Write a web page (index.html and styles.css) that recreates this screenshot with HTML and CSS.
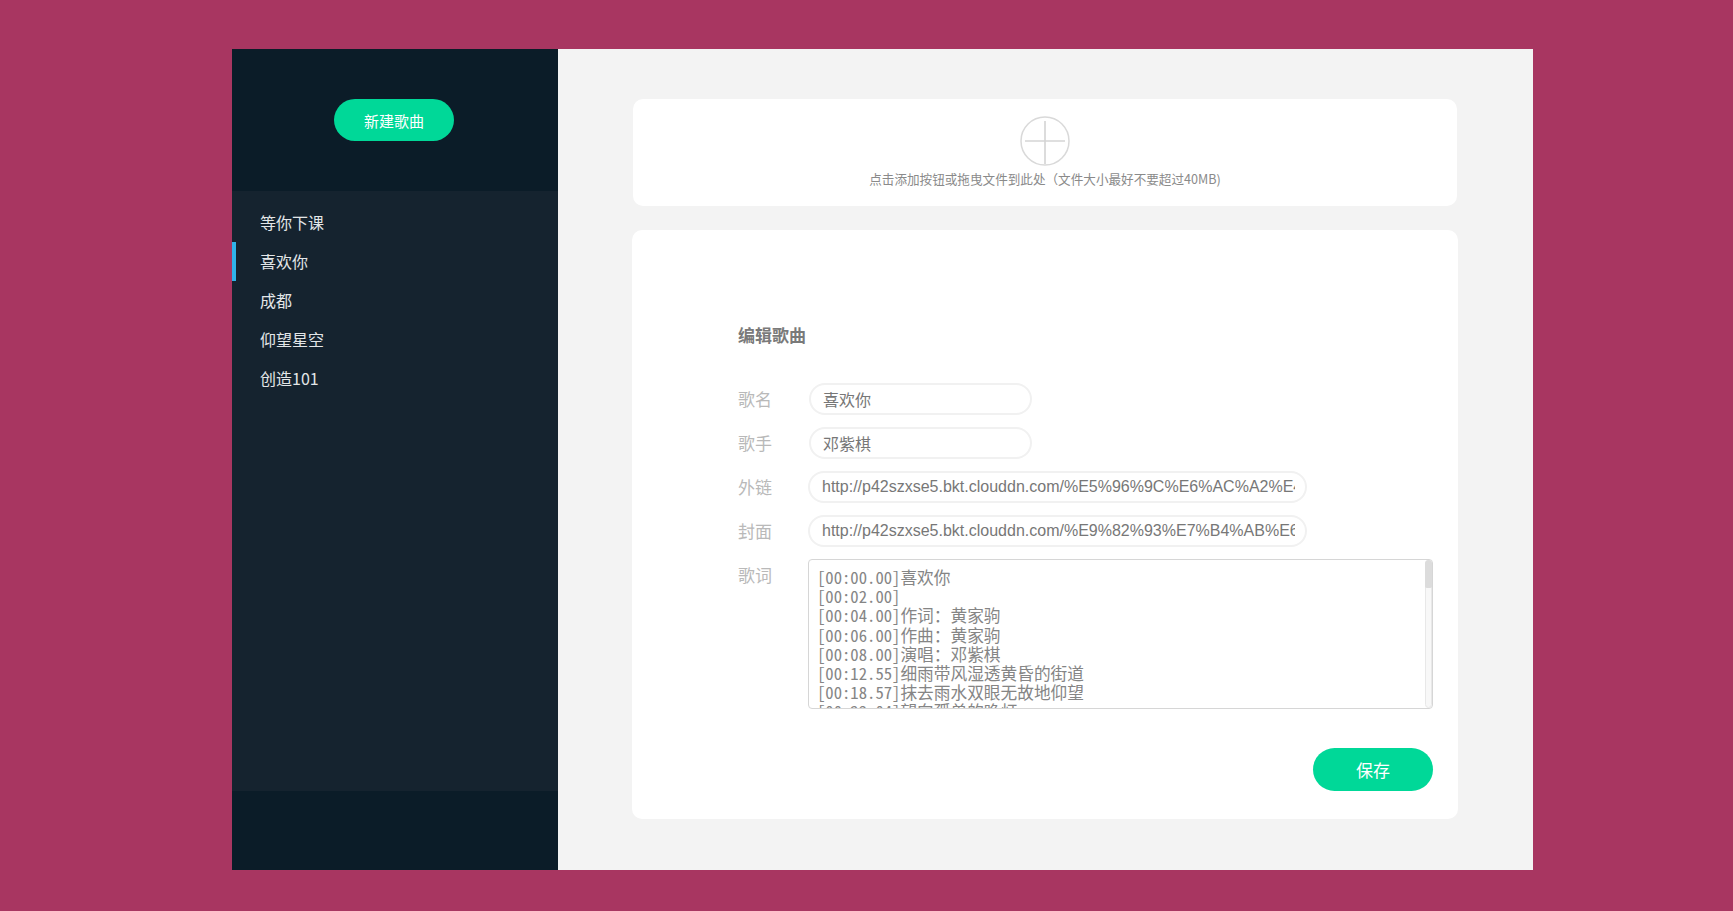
FILE: index.html
```html
<!DOCTYPE html>
<html lang="zh-CN">
<head>
<meta charset="utf-8">
<title>歌曲管理</title>
<link rel="stylesheet" href="styles.css">
</head>
<body>
<div class="app">
  <aside class="sidebar">
    <div class="side-top">
      <button class="btn btn-new" type="button">新建歌曲</button>
    </div>
    <ul class="song-list">
      <li class="song">等你下课</li>
      <li class="song active">喜欢你</li>
      <li class="song">成都</li>
      <li class="song">仰望星空</li>
      <li class="song">创造101</li>
    </ul>
    <div class="side-bottom"></div>
  </aside>
  <main class="main">
    <section class="upload">
      <div class="upload-circle">
        <svg width="50" height="50" viewBox="0 0 50 50" aria-hidden="true">
          <circle cx="25" cy="25" r="24" fill="none" stroke="#d9d9d9" stroke-width="1.5"/>
          <line x1="5" y1="25" x2="45" y2="25" stroke="#d4d4d4" stroke-width="1.6"/>
          <line x1="25" y1="5" x2="25" y2="48" stroke="#d4d4d4" stroke-width="1.6"/>
        </svg>
      </div>
      <p class="upload-tip">点击添加按钮或拖曳文件到此处（文件大小最好不要超过40MB)</p>
    </section>
    <section class="editor">
      <h2 class="editor-title">编辑歌曲</h2>
      <div class="row">
        <label class="label">歌名</label>
        <input class="field field-short" type="text" value="喜欢你">
      </div>
      <div class="row">
        <label class="label">歌手</label>
        <input class="field field-short" type="text" value="邓紫棋">
      </div>
      <div class="row">
        <label class="label">外链</label>
        <input class="field field-long" type="text" value="http://p42szxse5.bkt.clouddn.com/%E5%96%9C%E6%AC%A2%E4%BD%A0.mp3">
      </div>
      <div class="row">
        <label class="label">封面</label>
        <input class="field field-long" type="text" value="http://p42szxse5.bkt.clouddn.com/%E9%82%93%E7%B4%AB%E6%A3%8B.jpg">
      </div>
      <div class="row">
        <label class="label">歌词</label>
        <div class="lyrics-box">
        <textarea class="lyrics">[00:00.00]喜欢你
[00:02.00]
[00:04.00]作词：黄家驹
[00:06.00]作曲：黄家驹
[00:08.00]演唱：邓紫棋
[00:12.55]细雨带风湿透黄昏的街道
[00:18.57]抹去雨水双眼无故地仰望
[00:23.04]望向孤单的晚灯
[00:28.67]是那伤感的记忆
[00:33.86]再次泛起心里无数的思念
[00:40.31]以往片刻欢笑仍挂在脸上
[00:45.83]愿你此刻可会知
[00:50.29]是我衷心的说声
[00:56.02]喜欢你 那双眼动人
[01:01.74]笑声更迷人
[01:04.56]愿再可 轻抚你
[01:09.39]那可爱面容
[01:12.69]挽手说梦话
[01:15.73]像昨天 你共我
[01:23.57]满带理想的我曾经多冲动
[01:29.81]屡怨与她相爱难有自由
[01:34.63]愿你此刻可会知
[01:39.22]是我衷心的说声
[01:45.01]喜欢你 那双眼动人
[01:50.73]笑声更迷人
[01:53.56]愿再可 轻抚你
[01:58.39]那可爱面容
[02:01.69]挽手说梦话
[02:04.73]像昨天 你共我
[02:12.50]每晚夜里自我独行
[02:17.60]随处荡 多冰冷
[02:23.10]已往为了自我挣扎
[02:28.40]从不知 她的痛苦
[02:34.20]喜欢你 那双眼动人
[02:39.90]笑声更迷人
[02:42.80]愿再可 轻抚你
[02:47.60]那可爱面容
[02:50.90]挽手说梦话
[02:53.90]像昨天 你共我</textarea>
        <span class="scrollbar" aria-hidden="true"><span class="scrollbar-thumb"></span></span>
        </div>
      </div>
      <div class="actions">
        <button class="btn btn-save" type="button">保存</button>
      </div>
    </section>
  </main>
</div>
</body>
</html>
```

FILE: styles.css
```css
html, body {
  margin: 0;
  padding: 0;
}
body {
  background: #a83661;
  font-family: "Noto Sans CJK SC", "Liberation Sans", sans-serif;
  width: 1733px;
  height: 911px;
  overflow: hidden;
}
.app {
  display: flex;
  width: 1301px;
  height: 821px;
  margin: 49px 0 0 232px;
}
.sidebar {
  width: 326px;
  display: flex;
  flex-direction: column;
  background: #15232f;
}
.side-top {
  height: 142px;
  background: #0b1c28;
  display: flex;
  align-items: center;
  justify-content: center;
}
.btn {
  border: none;
  background: #00d898;
  color: #fff;
  font-family: "Noto Sans CJK SC", sans-serif;
  border-radius: 22px;
  cursor: pointer;
  padding: 0;
}
.btn-new {
  width: 120px;
  height: 42px;
  font-size: 15px;
  margin-left: -2px;
}
.song-list {
  list-style: none;
  margin: 0;
  padding: 12px 0 0;
  flex: 1;
}
.song {
  height: 39px;
  line-height: 39px;
  color: #e3e6e8;
  font-size: 16px;
  border-left: 4px solid transparent;
  box-sizing: border-box;
  padding-left: 24px;
}
.song.active {
  border-left-color: #2fb3e9;
}
.side-bottom {
  height: 79px;
  background: #0b1c28;
}
.main {
  flex: 1;
  background: #f3f3f3;
  padding: 50px 76px 0 75px;
}
.upload {
  height: 107px;
  background: #fff;
  border-radius: 10px;
  box-sizing: border-box;
  padding-top: 17px;
  display: flex;
  flex-direction: column;
  align-items: center;
}
.upload-circle {
  width: 50px;
  height: 50px;
  margin-left: -1px;
}
.upload-circle svg {
  display: block;
}
.upload-tip {
  margin: 5px 0 0;
  font-size: 12.6px;
  line-height: 16px;
  color: #8a8a8a;
}
.editor {
  margin: 24px -1px 0 -1px;
  height: 589px;
  box-sizing: border-box;
  background: #fff;
  border-radius: 10px;
  padding: 94px 25px 28px 106px;
  display: flex;
  flex-direction: column;
  gap: 12px;
}
.editor-title {
  margin: 0 0 25px;
  font-size: 17px;
  line-height: 22px;
  font-weight: 700;
  color: #7a7a7a;
}
.row {
  display: flex;
  align-items: flex-start;
}
.label {
  width: 71px;
  flex: none;
  font-size: 17px;
  line-height: 32px;
  color: #b9b9b9;
}
.field {
  height: 32px;
  box-sizing: border-box;
  border: 2px solid #f1f1f1;
  border-radius: 16px;
  padding: 0 10px 0 12px;
  font-family: "Liberation Sans", "Noto Sans CJK SC", sans-serif;
  font-size: 16px;
  color: #777;
  outline: none;
  background: #fff;
}
.field-short {
  width: 223px;
}
.field-long {
  width: 499px;
  margin-left: -1px;
}
.lyrics-box {
  position: relative;
  flex: 1;
  height: 150px;
  margin-left: -1px;
}
.lyrics {
  display: block;
  width: 100%;
  height: 150px;
  box-sizing: border-box;
  margin: 0;
  border: 1px solid #d6d6d6;
  border-radius: 4px;
  padding: 8px 16px 8px 8px;
  font-family: "Noto Sans Mono CJK SC", "Liberation Mono", monospace;
  font-size: 16.7px;
  line-height: 19.2px;
  color: #858585;
  resize: none;
  outline: none;
  white-space: pre;
  overflow: hidden;
  background: #fff;
}
.scrollbar {
  position: absolute;
  top: 1px;
  right: 1px;
  bottom: 1px;
  width: 7px;
  box-sizing: border-box;
  background: #f8f8f8;
  border: 1px solid #e8e8e8;
  border-radius: 4px;
}
.scrollbar-thumb {
  display: block;
  height: 28px;
  margin: -1px;
  background: #dcdcdc;
  border-radius: 4px 4px 2px 2px;
}
.actions {
  display: flex;
  justify-content: flex-end;
  margin-top: 27px;
}
.btn-save {
  width: 120px;
  height: 43px;
  border-radius: 22px;
  font-size: 17px;
}
```
